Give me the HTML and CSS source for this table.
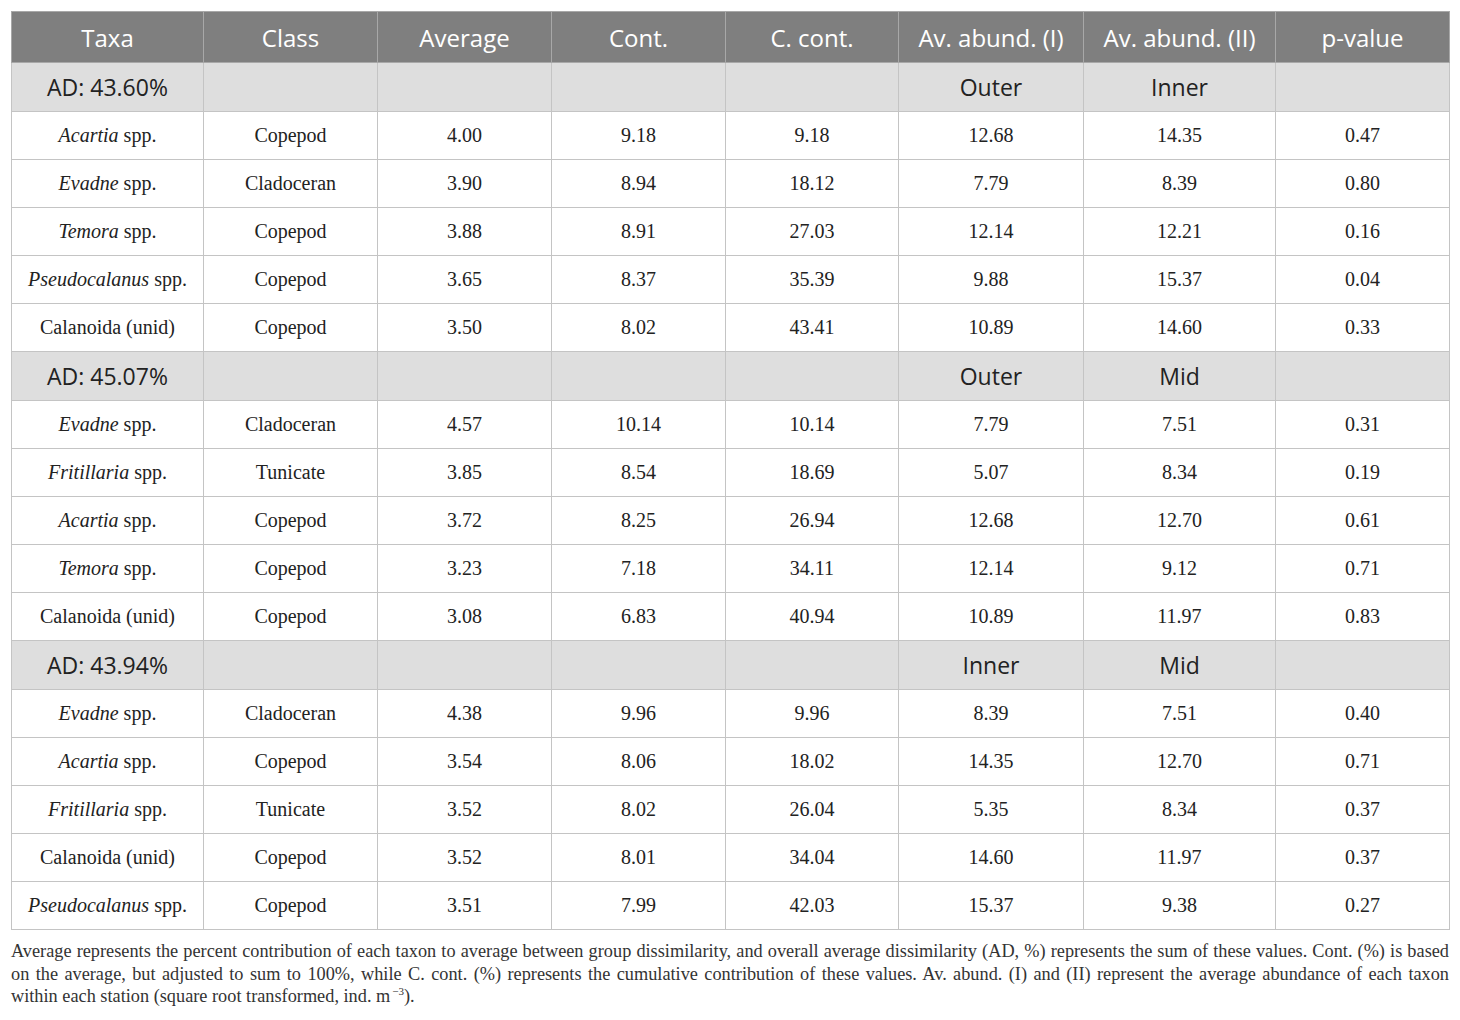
FILE: index.html
```html
<!DOCTYPE html>
<html lang="en">
<head>
    <meta charset="UTF-8">
    <title>Taxa dissimilarity table</title>
    <link rel="stylesheet" href="styles.css">
</head>
<body>
    <div class="wrap">
        <table class="simper">
            <colgroup>
                <col style="width:192px"><col style="width:174px"><col style="width:174px"><col style="width:174px">
                <col style="width:173px"><col style="width:185px"><col style="width:192px"><col style="width:174px">
            </colgroup>
            <thead>
                <tr>
                    <th>Taxa</th><th>Class</th><th>Average</th><th>Cont.</th>
                    <th>C. cont.</th><th>Av. abund. (I)</th><th>Av. abund. (II)</th><th>p-value</th>
                </tr>
            </thead>
            <tbody>
                <tr class="group"><td>AD: 43.60%</td><td></td><td></td><td></td><td></td><td>Outer</td><td>Inner</td><td></td></tr>
                <tr><td><i>Acartia</i> spp.</td><td>Copepod</td><td>4.00</td><td>9.18</td><td>9.18</td><td>12.68</td><td>14.35</td><td>0.47</td></tr>
                <tr><td><i>Evadne</i> spp.</td><td>Cladoceran</td><td>3.90</td><td>8.94</td><td>18.12</td><td>7.79</td><td>8.39</td><td>0.80</td></tr>
                <tr><td><i>Temora</i> spp.</td><td>Copepod</td><td>3.88</td><td>8.91</td><td>27.03</td><td>12.14</td><td>12.21</td><td>0.16</td></tr>
                <tr><td><i>Pseudocalanus</i> spp.</td><td>Copepod</td><td>3.65</td><td>8.37</td><td>35.39</td><td>9.88</td><td>15.37</td><td>0.04</td></tr>
                <tr><td>Calanoida (unid)</td><td>Copepod</td><td>3.50</td><td>8.02</td><td>43.41</td><td>10.89</td><td>14.60</td><td>0.33</td></tr>
                <tr class="group"><td>AD: 45.07%</td><td></td><td></td><td></td><td></td><td>Outer</td><td>Mid</td><td></td></tr>
                <tr><td><i>Evadne</i> spp.</td><td>Cladoceran</td><td>4.57</td><td>10.14</td><td>10.14</td><td>7.79</td><td>7.51</td><td>0.31</td></tr>
                <tr><td><i>Fritillaria</i> spp.</td><td>Tunicate</td><td>3.85</td><td>8.54</td><td>18.69</td><td>5.07</td><td>8.34</td><td>0.19</td></tr>
                <tr><td><i>Acartia</i> spp.</td><td>Copepod</td><td>3.72</td><td>8.25</td><td>26.94</td><td>12.68</td><td>12.70</td><td>0.61</td></tr>
                <tr><td><i>Temora</i> spp.</td><td>Copepod</td><td>3.23</td><td>7.18</td><td>34.11</td><td>12.14</td><td>9.12</td><td>0.71</td></tr>
                <tr><td>Calanoida (unid)</td><td>Copepod</td><td>3.08</td><td>6.83</td><td>40.94</td><td>10.89</td><td>11.97</td><td>0.83</td></tr>
                <tr class="group"><td>AD: 43.94%</td><td></td><td></td><td></td><td></td><td>Inner</td><td>Mid</td><td></td></tr>
                <tr><td><i>Evadne</i> spp.</td><td>Cladoceran</td><td>4.38</td><td>9.96</td><td>9.96</td><td>8.39</td><td>7.51</td><td>0.40</td></tr>
                <tr><td><i>Acartia</i> spp.</td><td>Copepod</td><td>3.54</td><td>8.06</td><td>18.02</td><td>14.35</td><td>12.70</td><td>0.71</td></tr>
                <tr><td><i>Fritillaria</i> spp.</td><td>Tunicate</td><td>3.52</td><td>8.02</td><td>26.04</td><td>5.35</td><td>8.34</td><td>0.37</td></tr>
                <tr><td>Calanoida (unid)</td><td>Copepod</td><td>3.52</td><td>8.01</td><td>34.04</td><td>14.60</td><td>11.97</td><td>0.37</td></tr>
                <tr><td><i>Pseudocalanus</i> spp.</td><td>Copepod</td><td>3.51</td><td>7.99</td><td>42.03</td><td>15.37</td><td>9.38</td><td>0.27</td></tr>
            </tbody>
        </table>
        <p class="caption">
            <span class="line">Average represents the percent contribution of each taxon to average between group dissimilarity, and overall average dissimilarity (AD, %) represents the sum of these values. Cont. (%) is based</span>
            <span class="line">on the average, but adjusted to sum to 100%, while C. cont. (%) represents the cumulative contribution of these values. Av. abund. (I) and (II) represent the average abundance of each taxon</span>
            <span class="line last">within each station (square root transformed, ind. m<sup>&minus;3</sup>).</span>
        </p>
    </div>
</body>
</html>
```

FILE: styles.css
```css
body {
    margin: 0;
    padding: 11px;
    background-color: #ffffff;
    font-family: "Liberation Serif", "Times New Roman", serif;
    color: #222;
}

.wrap {
    width: 1438px;
}

.simper {
    width: 1438px;
    border-collapse: collapse;
    table-layout: fixed;
}

.simper th,
.simper td {
    border: 1px solid #c4c4c4;
    text-align: center;
    padding: 0 4px;
    white-space: nowrap;
}

.simper th {
    background-color: #7f7f7f;
    color: #ffffff;
    font-family: "Open Sans", "Noto Sans", sans-serif;
    font-weight: normal;
    font-size: 24px;
    height: 50px;
    border-color: #a8a8a8;
}

.simper td {
    height: 47px;
    font-size: 20px;
}

.simper tr.group td {
    background-color: #dedede;
    font-family: "Open Sans", "Noto Sans", sans-serif;
    font-size: 23px;
    height: 48px;
}

.caption {
    margin: 10px 0 0;
    font-size: 18.3px;
    line-height: 22.5px;
    color: #333;
}

.caption .line {
    display: block;
    text-align: justify;
    text-align-last: justify;
}

.caption .line.last {
    text-align-last: left;
}

.caption sup {
    font-size: 11px;
    line-height: 0;
    margin-left: 2px;
}
```
